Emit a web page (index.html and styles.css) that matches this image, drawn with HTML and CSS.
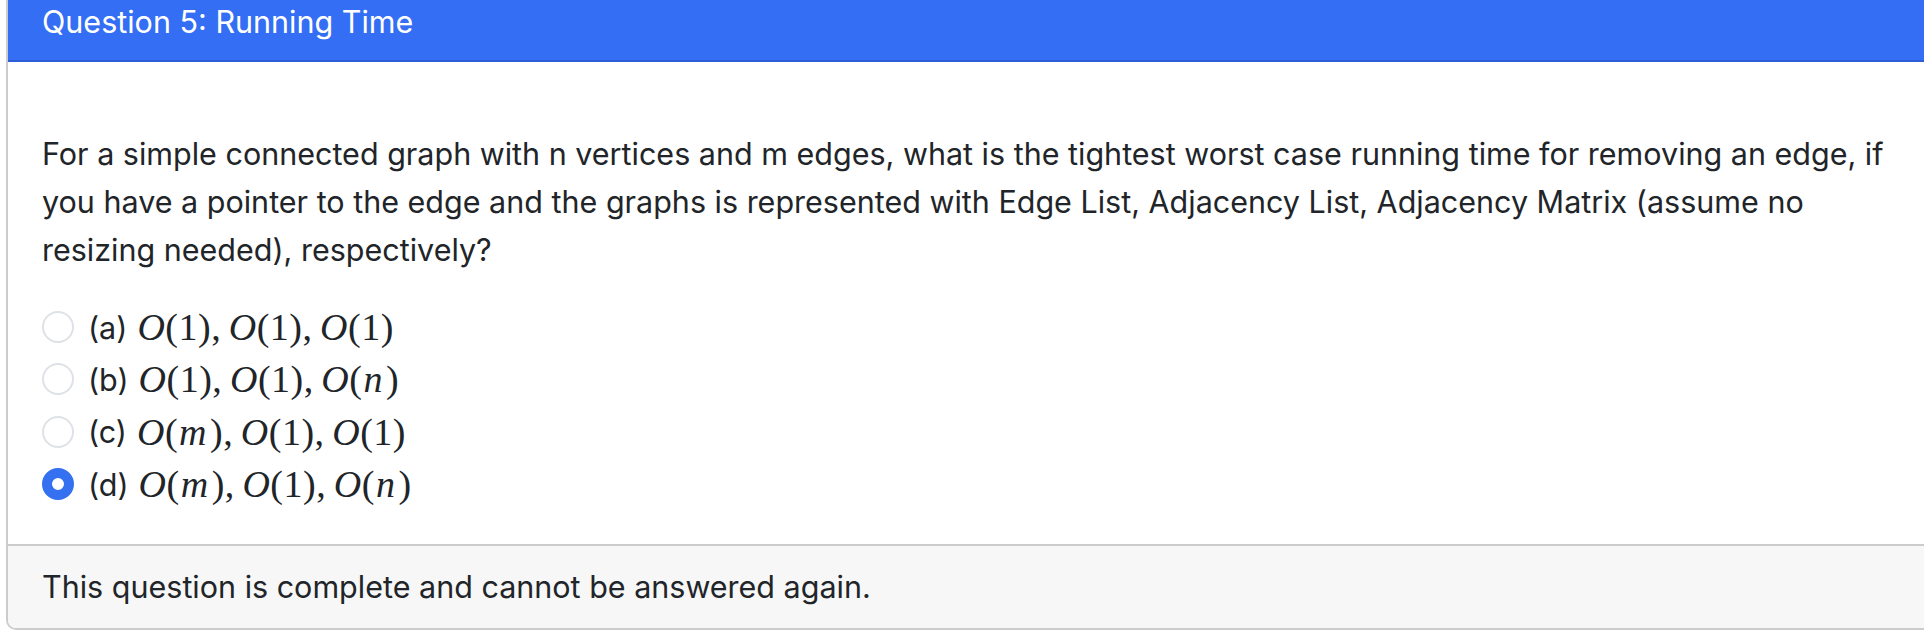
FILE: index.html
```html
<!DOCTYPE html>
<html>
<head>
<meta charset="utf-8">
<link rel="stylesheet" href="styles.css">
</head>
<body>
<div class="card">
  <div class="card-header">Question 5: Running Time</div>
  <div class="card-body">
    <p class="prompt">For a simple connected graph with n vertices and m edges, what is the tightest worst case running time for removing an edge, if you have a pointer to the edge and the graphs is represented with Edge List, Adjacency List, Adjacency Matrix (assume no resizing needed), respectively?</p>
    <ul class="options">
      <li class="option"><span class="radio"></span><span class="label">(a)</span><span class="math"><i>O</i>(1)<span class="punct">,</span><i>O</i>(1)<span class="punct">,</span><i>O</i>(1)</span></li>
      <li class="option"><span class="radio"></span><span class="label">(b)</span><span class="math"><i>O</i>(1)<span class="punct">,</span><i>O</i>(1)<span class="punct">,</span><i>O</i>(<i class="var">n</i>)</span></li>
      <li class="option"><span class="radio"></span><span class="label">(c)</span><span class="math"><i>O</i>(<i class="var">m</i>)<span class="punct">,</span><i>O</i>(1)<span class="punct">,</span><i>O</i>(1)</span></li>
      <li class="option"><span class="radio checked"></span><span class="label">(d)</span><span class="math"><i>O</i>(<i class="var">m</i>)<span class="punct">,</span><i>O</i>(1)<span class="punct">,</span><i>O</i>(<i class="var">n</i>)</span></li>
    </ul>
  </div>
  <div class="card-footer">This question is complete and cannot be answered again.</div>
</div>
</body>
</html>
```
FILE: styles.css
```css
html, body {
  margin: 0;
  padding: 0;
  background: #fff;
  overflow: hidden;
}
body {
  font-family: Inter, "Noto Sans", sans-serif;
  color: #212529;
  width: 1924px;
}
.card {
  margin-left: 6px;
  width: 1940px;
  border: 2px solid #cccccc;
  border-top: none;
  border-radius: 0 0 10px 10px;
  overflow: hidden;
}
.card-header {
  background: #336ef4;
  color: #fff;
  font-size: 30.5px;
  height: 54px;
  padding: 6px 0 0 34px;
  line-height: 32px;
  border-bottom: 2px solid #2c5fd6;
}
.card-body {
  padding: 68px 0 34px 34px;
}
.prompt {
  margin: 0 0 27px 0;
  font-size: 30.5px;
  line-height: 48px;
  width: 1860px;
}
.options {
  list-style: none;
  margin: 0;
  padding: 0;
}
.option {
  display: flex;
  align-items: center;
  height: 52.3px;
  font-size: 30.5px;
}
.radio {
  border: 2px solid #dee2e6;
  border-radius: 50%;
  box-sizing: border-box;
  width: 32px;
  height: 32px;
  margin-right: 14px;
  flex: none;
}
.radio.checked {
  border: 10px solid #3470f0;
  background: #fff;
}
.label {
  margin-right: 10px;
}
.math {
  font-family: "Liberation Serif", "DejaVu Serif", serif;
  font-size: 38px;
  letter-spacing: 0.5px;
}
.math i {
  font-style: italic;
}
.math .var {
  padding: 0 3px 0 1px;
}
.punct {
  margin-right: 0.2em;
}
.card-footer {
  background: #f7f7f7;
  border-top: 2px solid #cccccc;
  font-size: 30.5px;
  line-height: 40px;
  padding: 21px 0 21px 34px;
}
```
